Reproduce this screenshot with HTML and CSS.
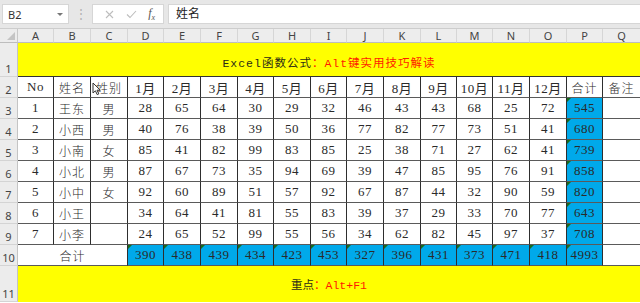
FILE: index.html
```html
<!DOCTYPE html>
<html lang="zh-CN">
<head>
    <meta charset="UTF-8">
    <title>Excel函数公式</title>
    <link rel="stylesheet" href="styles.css">
</head>
<body>
    <div class="formula-bar">
        <div class="name-box">
            <span>B2</span>
            <span class="caret"></span>
        </div>
        <div class="bar-dots">⋮</div>
        <div class="fx-box">
            <svg class="fx-icon" width="9" height="9" viewBox="0 0 9 9"><path d="M1 1 L8 8 M8 1 L1 8" stroke="#bdbdbd" stroke-width="1.1" fill="none"/></svg>
            <svg class="fx-icon" width="11" height="9" viewBox="0 0 11 9"><path d="M1 4.5 L4 7.5 L10 1" stroke="#bdbdbd" stroke-width="1.1" fill="none"/></svg>
            <span class="fx-label">f<sub>x</sub></span>
        </div>
        <div class="formula-input">姓名</div>
    </div>

    <div class="sheet">
        <!-- column headers -->
        <div class="corner"></div>
        <div class="col-head">A</div>
        <div class="col-head">B</div>
        <div class="col-head">C</div>
        <div class="col-head">D</div>
        <div class="col-head">E</div>
        <div class="col-head">F</div>
        <div class="col-head">G</div>
        <div class="col-head">H</div>
        <div class="col-head">I</div>
        <div class="col-head">J</div>
        <div class="col-head">K</div>
        <div class="col-head">L</div>
        <div class="col-head">M</div>
        <div class="col-head">N</div>
        <div class="col-head">O</div>
        <div class="col-head">P</div>
        <div class="col-head last">Q</div>

        <!-- row 1 -->
        <div class="row-head">1</div>
        <div class="title-cell"><span class="dark">Excel函数公式</span><span class="red">：Alt键实用技巧解读</span></div>

        <!-- row 2 -->
        <div class="row-head">2</div>
        <div class="cell">No</div>
        <div class="cell cn">姓名</div>
        <div class="cell cn has-cursor">姓别
            <svg class="cursor" width="10" height="14" viewBox="0 0 10 14"><path d="M1 1 L1 11 L3.4 8.8 L5.2 12.6 L6.8 11.9 L5 8.2 L8.3 8.2 Z" fill="#fff" stroke="#333" stroke-width="1"/></svg>
        </div>
        <div class="cell">1月</div>
        <div class="cell">2月</div>
        <div class="cell">3月</div>
        <div class="cell">4月</div>
        <div class="cell">5月</div>
        <div class="cell">6月</div>
        <div class="cell">7月</div>
        <div class="cell">8月</div>
        <div class="cell">9月</div>
        <div class="cell">10月</div>
        <div class="cell">11月</div>
        <div class="cell">12月</div>
        <div class="cell cn">合计</div>
        <div class="cell cn last">备注</div>

        <!-- row 3 -->
        <div class="row-head">3</div>
        <div class="cell">1</div>
        <div class="cell cn">王东</div>
        <div class="cell cn">男</div>
        <div class="cell">28</div>
        <div class="cell">65</div>
        <div class="cell">64</div>
        <div class="cell">30</div>
        <div class="cell">29</div>
        <div class="cell">32</div>
        <div class="cell">46</div>
        <div class="cell">43</div>
        <div class="cell">43</div>
        <div class="cell">68</div>
        <div class="cell">25</div>
        <div class="cell">72</div>
        <div class="cell sum">545</div>
        <div class="cell last"></div>

        <!-- row 4 -->
        <div class="row-head">4</div>
        <div class="cell">2</div>
        <div class="cell cn">小西</div>
        <div class="cell cn">男</div>
        <div class="cell">40</div>
        <div class="cell">76</div>
        <div class="cell">38</div>
        <div class="cell">39</div>
        <div class="cell">50</div>
        <div class="cell">36</div>
        <div class="cell">77</div>
        <div class="cell">82</div>
        <div class="cell">77</div>
        <div class="cell">73</div>
        <div class="cell">51</div>
        <div class="cell">41</div>
        <div class="cell sum">680</div>
        <div class="cell last"></div>

        <!-- row 5 -->
        <div class="row-head">5</div>
        <div class="cell">3</div>
        <div class="cell cn">小南</div>
        <div class="cell cn">女</div>
        <div class="cell">85</div>
        <div class="cell">41</div>
        <div class="cell">82</div>
        <div class="cell">99</div>
        <div class="cell">83</div>
        <div class="cell">85</div>
        <div class="cell">25</div>
        <div class="cell">38</div>
        <div class="cell">71</div>
        <div class="cell">27</div>
        <div class="cell">62</div>
        <div class="cell">41</div>
        <div class="cell sum">739</div>
        <div class="cell last"></div>

        <!-- row 6 -->
        <div class="row-head">6</div>
        <div class="cell">4</div>
        <div class="cell cn">小北</div>
        <div class="cell cn">男</div>
        <div class="cell">87</div>
        <div class="cell">67</div>
        <div class="cell">73</div>
        <div class="cell">35</div>
        <div class="cell">94</div>
        <div class="cell">69</div>
        <div class="cell">39</div>
        <div class="cell">47</div>
        <div class="cell">85</div>
        <div class="cell">95</div>
        <div class="cell">76</div>
        <div class="cell">91</div>
        <div class="cell sum">858</div>
        <div class="cell last"></div>

        <!-- row 7 -->
        <div class="row-head">7</div>
        <div class="cell">5</div>
        <div class="cell cn">小中</div>
        <div class="cell cn">女</div>
        <div class="cell">92</div>
        <div class="cell">60</div>
        <div class="cell">89</div>
        <div class="cell">51</div>
        <div class="cell">57</div>
        <div class="cell">92</div>
        <div class="cell">67</div>
        <div class="cell">87</div>
        <div class="cell">44</div>
        <div class="cell">32</div>
        <div class="cell">90</div>
        <div class="cell">59</div>
        <div class="cell sum">820</div>
        <div class="cell last"></div>

        <!-- row 8 -->
        <div class="row-head">8</div>
        <div class="cell">6</div>
        <div class="cell cn">小王</div>
        <div class="cell cn"></div>
        <div class="cell">34</div>
        <div class="cell">64</div>
        <div class="cell">41</div>
        <div class="cell">81</div>
        <div class="cell">55</div>
        <div class="cell">83</div>
        <div class="cell">39</div>
        <div class="cell">37</div>
        <div class="cell">29</div>
        <div class="cell">33</div>
        <div class="cell">70</div>
        <div class="cell">77</div>
        <div class="cell sum">643</div>
        <div class="cell last"></div>

        <!-- row 9 -->
        <div class="row-head">9</div>
        <div class="cell">7</div>
        <div class="cell cn">小李</div>
        <div class="cell cn"></div>
        <div class="cell">24</div>
        <div class="cell">65</div>
        <div class="cell">52</div>
        <div class="cell">99</div>
        <div class="cell">55</div>
        <div class="cell">56</div>
        <div class="cell">34</div>
        <div class="cell">62</div>
        <div class="cell">82</div>
        <div class="cell">45</div>
        <div class="cell">97</div>
        <div class="cell">37</div>
        <div class="cell sum">708</div>
        <div class="cell last"></div>

        <!-- row 10 -->
        <div class="row-head">10</div>
        <div class="cell cn total-label">合计</div>
        <div class="cell sum">390</div>
        <div class="cell sum">438</div>
        <div class="cell sum">439</div>
        <div class="cell sum">434</div>
        <div class="cell sum">423</div>
        <div class="cell sum">453</div>
        <div class="cell sum">327</div>
        <div class="cell sum">396</div>
        <div class="cell sum">431</div>
        <div class="cell sum">373</div>
        <div class="cell sum">471</div>
        <div class="cell sum">418</div>
        <div class="cell sum">4993</div>
        <div class="cell last"></div>

        <!-- row 11 -->
        <div class="row-head">11</div>
        <div class="note-cell"><span class="dark">重点</span><span class="red">：Alt+F1</span></div>
    </div>
</body>
</html>
```

FILE: styles.css
```css
body {
    margin: 0;
    width: 640px;
    height: 303px;
    overflow: hidden;
    background: #fff;
    font-family: "Liberation Serif", "Noto Sans CJK SC", serif;
    color: #2a2a2a;
}

/* formula bar */
.formula-bar {
    display: flex;
    align-items: flex-start;
    height: 29px;
    box-sizing: border-box;
    padding-top: 4px;
    background: #e7e7e7;
    border-bottom: 1px solid #cdcdcd;
    font-family: "Noto Sans", "Noto Sans CJK SC", sans-serif;
}
.name-box {
    display: flex;
    align-items: center;
    justify-content: space-between;
    width: 67px;
    height: 20px;
    margin-left: 2px;
    padding: 0 5px 0 5px;
    box-sizing: border-box;
    background: #fff;
    border: 1px solid #d6d6d6;
    font-size: 11px;
    color: #333;
}
.caret {
    width: 0;
    height: 0;
    border-left: 3px solid transparent;
    border-right: 3px solid transparent;
    border-top: 3px solid #777;
}
.bar-dots {
    width: 23px;
    text-align: center;
    font-size: 12px;
    line-height: 20px;
    color: #b0b0b0;
}
.fx-box {
    display: flex;
    align-items: center;
    justify-content: space-around;
    width: 72px;
    height: 20px;
    box-sizing: border-box;
    padding: 0 2px 0 6px;
    background: #fff;
    border: 1px solid #d6d6d6;
}
.fx-label {
    font-family: "Liberation Serif", serif;
    font-style: italic;
    font-size: 12px;
    color: #555;
}
.fx-label sub {
    font-size: 8px;
}
.formula-input {
    flex: 1;
    height: 20px;
    margin-left: 4px;
    margin-right: -2px;
    padding-left: 7px;
    box-sizing: border-box;
    background: #fff;
    border: 1px solid #d6d6d6;
    font-size: 12px;
    line-height: 18px;
    color: #222;
}

/* sheet grid */
.sheet {
    display: grid;
    grid-template-columns: 18px 36px 37px 37px 36px 37px 37px 36px 37px 36px 37px 37px 36px 36px 37px 37px 36px 37px;
    grid-template-rows: 14px 34px repeat(9, 21px) 36px;
}
.corner {
    position: relative;
    background: #ececec;
    border-right: 1px solid #c8c8c8;
    border-bottom: 1px solid #bdbdbd;
}
.corner::after {
    content: "";
    position: absolute;
    right: 2px;
    bottom: 2px;
    border-left: 8px solid transparent;
    border-bottom: 8px solid #c4c4c4;
}
.col-head {
    background: #ededed;
    border-right: 1px solid #d6d6d6;
    border-bottom: 1px solid #bdbdbd;
    font-family: "Noto Sans", sans-serif;
    font-size: 11px;
    line-height: 13px;
    text-align: center;
    color: #444;
}
.col-head.last {
    border-right: none;
}
.row-head {
    display: flex;
    align-items: flex-end;
    justify-content: center;
    padding-bottom: 1px;
    box-sizing: border-box;
    background: #ececec;
    border-right: 1px solid #c4c4c4;
    border-bottom: 1px solid #d4d4d4;
    font-family: "Noto Sans", sans-serif;
    font-size: 11px;
    line-height: 13px;
    color: #444;
}

.title-cell,
.note-cell {
    grid-column: 2 / -1;
    display: flex;
    align-items: center;
    justify-content: center;
    background: #ffff00;
    font-family: "Liberation Mono", "Noto Sans CJK SC", monospace;
    font-size: 11.5px;
}
.title-cell {
    padding-top: 4px;
    box-sizing: border-box;
    border-bottom: 1px solid #333;
    letter-spacing: 1px;
}
.dark {
    color: #2b2b16;
}
.red {
    color: #ff1a00;
}

.cell {
    position: relative;
    display: flex;
    align-items: center;
    justify-content: center;
    box-sizing: border-box;
    border-right: 1px solid #2e2e2e;
    border-bottom: 1px solid #5a5a5a;
    font-size: 13px;
    letter-spacing: 0.5px;
}
.cell.cn {
    font-family: "Noto Sans CJK SC", sans-serif;
    font-weight: 300;
    font-size: 12px;
    letter-spacing: 1px;
}
.cell.last {
    border-right: none;
}
.total-label {
    grid-column: span 3;
}
.sum {
    background: #00a9ea;
}
.sum::before {
    content: "";
    position: absolute;
    top: 0;
    left: 0;
    border-top: 4px solid #1b6b1b;
    border-right: 4px solid transparent;
}
.cursor {
    position: absolute;
    left: 1px;
    top: 5px;
}
```
